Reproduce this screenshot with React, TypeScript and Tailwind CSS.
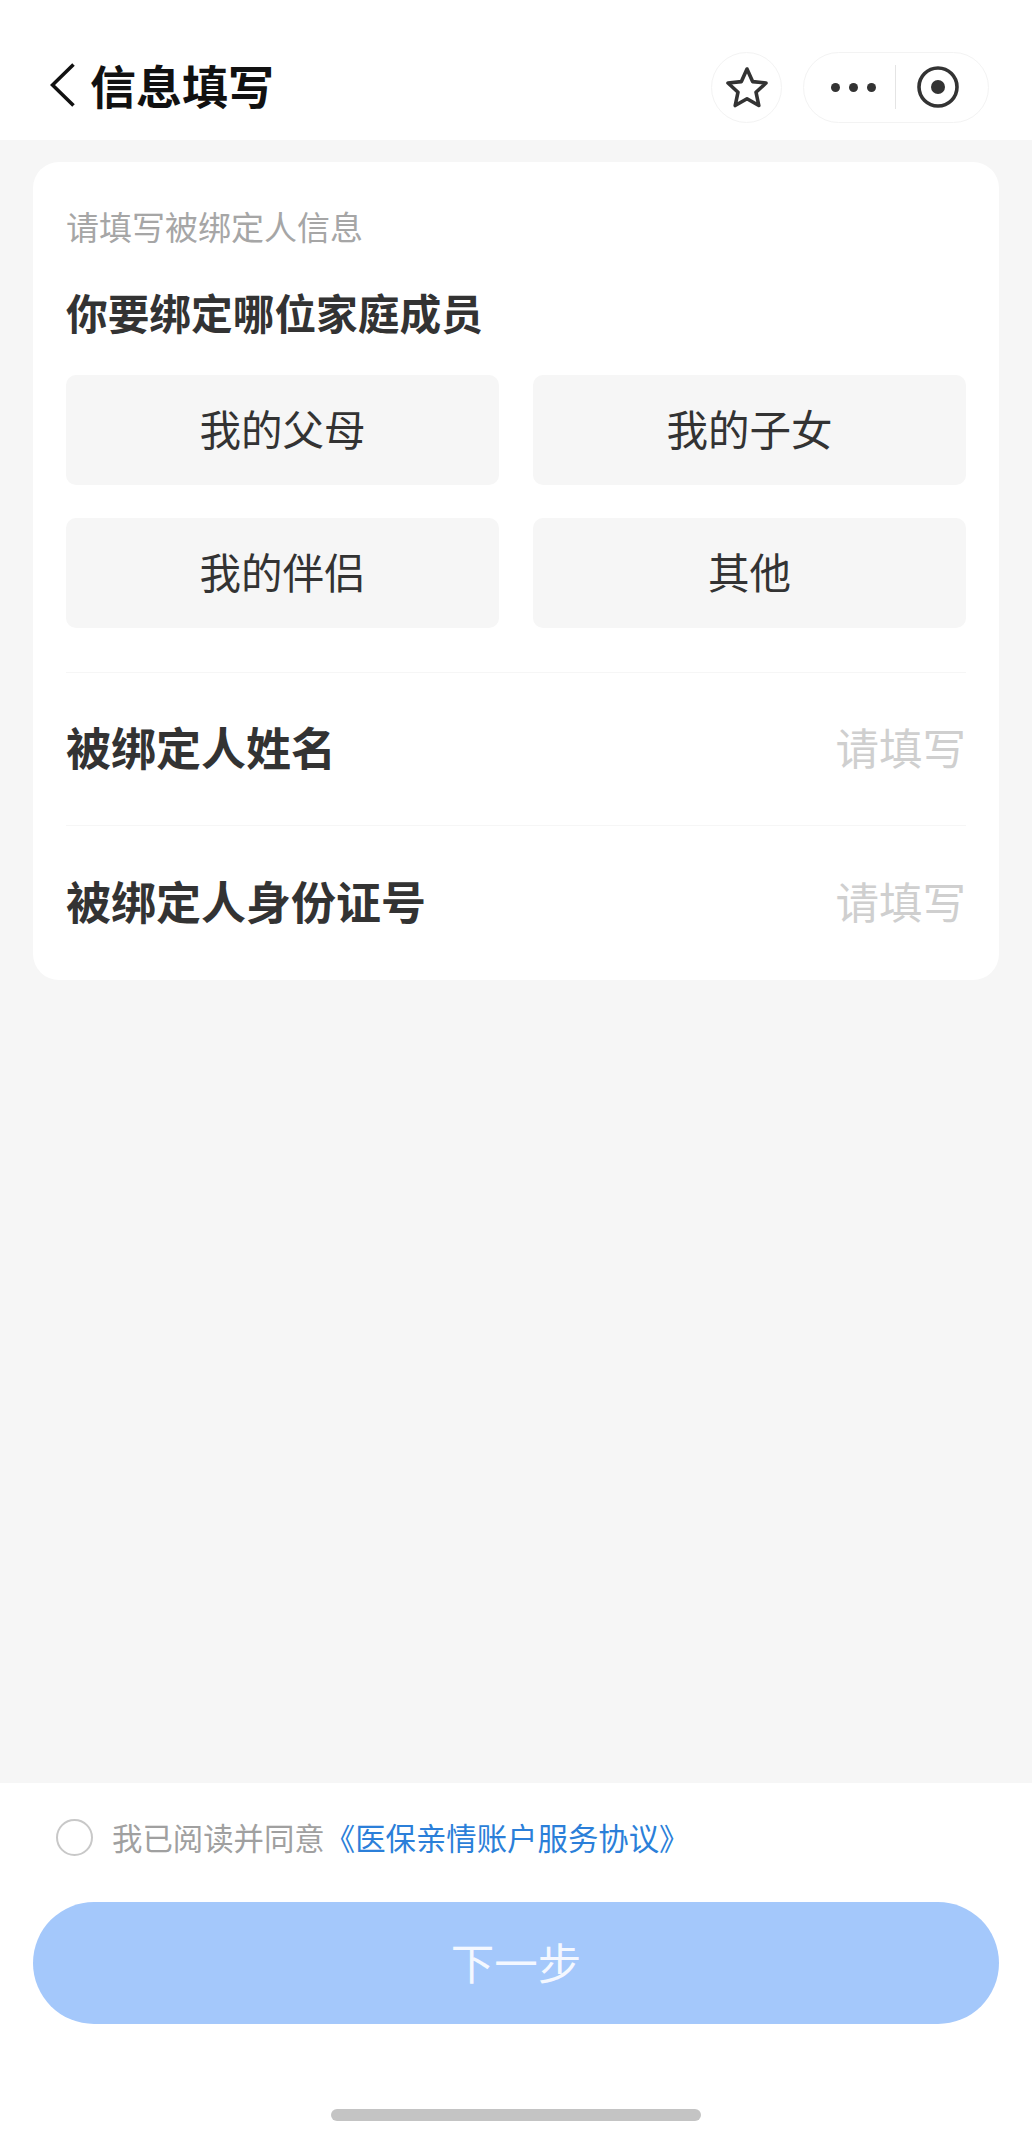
import React from "react";

const font = { fontFamily: '"Noto Sans CJK SC", "Noto Sans", sans-serif' };

function Choice({ label }: { label: string }) {
  return (
    <div className="h-[110px] pb-[5px] rounded-[10px] bg-[#f6f6f6] flex items-center justify-center text-[41.5px] leading-[50px] text-[#333333]">
      {label}
    </div>
  );
}

function Row({ label, h }: { label: string; h: string }) {
  return (
    <div className={`${h} pb-[5px] border-t border-[#f6f6f6] flex items-center justify-between`}>
      <span className="text-[45px] leading-[54px] font-bold text-[#333333]">{label}</span>
      <span className="text-[43.5px] leading-[54px] text-[#cfcfcf]">请填写</span>
    </div>
  );
}

export default function App() {
  return (
    <div className="w-[1032px] h-[2141px] flex flex-col bg-white overflow-hidden" style={font}>
      <header className="h-[140px] shrink-0 flex items-center pl-[50px] pr-[43px] pt-[34px] bg-white">
        <div className="flex items-center mb-[6px]">
          <svg width="25" height="44" viewBox="0 0 25 44" fill="none" className="shrink-0 mt-[2px]">
            <path d="M23.5 1.5 L2.5 22 L23.5 42.5" stroke="#111111" strokeWidth="3.6" />
          </svg>
          <h1 className="ml-[15px] text-[46px] leading-[50px] font-bold text-[#111111]">信息填写</h1>
        </div>
        <div className="ml-auto flex items-center gap-[21px]">
          <div className="w-[71px] h-[71px] rounded-full border border-[#f3f3f3] flex items-center justify-center">
            <svg width="44" height="42" viewBox="0 0 44 42" fill="none">
              <path
                d="M22 3 L27.6 15.6 L41 17 L31 26.2 L33.8 39.5 L22 32.7 L10.2 39.5 L13 26.2 L3 17 L16.4 15.6 Z"
                stroke="#333333"
                strokeWidth="3.6"
                strokeLinejoin="round"
              />
            </svg>
          </div>
          <div className="w-[186px] h-[71px] rounded-full border border-[#f3f3f3] flex items-center pl-[27px]">
            <div className="flex items-center gap-[9px]">
              <span className="w-[9px] h-[9px] rounded-full bg-[#333333]" />
              <span className="w-[9px] h-[9px] rounded-full bg-[#333333]" />
              <span className="w-[9px] h-[9px] rounded-full bg-[#333333]" />
            </div>
            <div className="ml-[19px] w-px h-[44px] bg-[#e4e4e4]" />
            <svg width="42" height="42" viewBox="0 0 42 42" fill="none" className="ml-[21px]">
              <circle cx="21" cy="21" r="19" stroke="#333333" strokeWidth="3.6" />
              <circle cx="21" cy="21" r="7" fill="#333333" />
            </svg>
          </div>
        </div>
      </header>

      <main className="flex-1 bg-[#f6f6f6] px-[33px] pt-[22px]">
        <section className="h-[818px] rounded-[26px] bg-white px-[33px] pt-[44px]">
          <p className="text-[33px] leading-[40px] text-[#a6a6a6]">请填写被绑定人信息</p>
          <h2 className="mt-[41px] text-[41.7px] leading-[50px] font-bold text-[#333333]">你要绑定哪位家庭成员</h2>
          <div className="mt-[38px] grid grid-cols-2 gap-x-[34px] gap-y-[33px]">
            <Choice label="我的父母" />
            <Choice label="我的子女" />
            <Choice label="我的伴侣" />
            <Choice label="其他" />
          </div>
          <div className="mt-[44px]">
            <Row label="被绑定人姓名" h="h-[153px]" />
            <Row label="被绑定人身份证号" h="h-[155px]" />
          </div>
        </section>
      </main>

      <footer className="h-[358px] shrink-0 bg-white px-[33px]">
        <div className="pl-[23px] pb-[2px] flex items-center h-[110px]">
          <span className="w-[37px] h-[37px] rounded-full border-2 border-[#c8c8c8] shrink-0" />
          <span className="ml-[19px] text-[30.4px] leading-[40px] text-[#a0a0a0]">我已阅读并同意</span>
          <span className="text-[30.4px] leading-[40px] text-[#2b7fd9]">《医保亲情账户服务协议》</span>
        </div>
        <div className="mt-[9px] h-[122px] pb-[3px] rounded-full bg-[#a4c8fb] flex items-center justify-center text-[43.5px] leading-[50px] text-[#f4f8ff]">
          下一步
        </div>
        <div className="mt-[85px] mx-auto w-[370px] h-[12px] rounded-full bg-[#c4c4c4]" />
      </footer>
    </div>
  );
}
